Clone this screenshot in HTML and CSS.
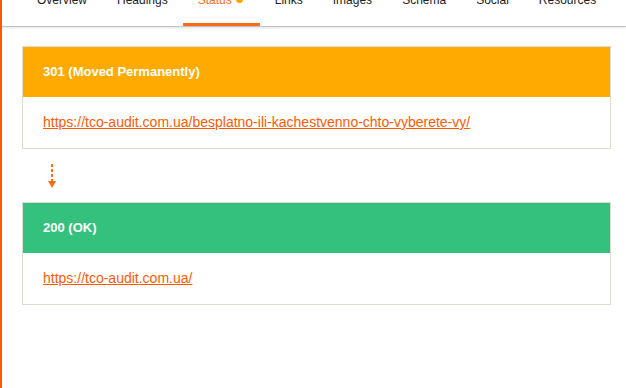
FILE: index.html
```html
<!DOCTYPE html>
<html lang="en">
<head>
    <meta charset="UTF-8">
    <meta name="viewport" content="width=device-width, initial-scale=1.0">
    <title>Status - Redirect Chain</title>
    <link rel="stylesheet" href="styles.css">
</head>
<body>
    <div class="panel">
        <div class="tabs">
            <div class="tab">Overview</div>
            <div class="tab">Headings</div>
            <div class="tab active">Status<span class="dot"></span></div>
            <div class="tab">Links</div>
            <div class="tab">Images</div>
            <div class="tab">Schema</div>
            <div class="tab">Social</div>
            <div class="tab">Resources</div>
        </div>

        <div class="content">
            <div class="status-card">
                <div class="status-head redirect">301 (Moved Permanently)</div>
                <div class="status-body">
                    <a href="#">https://tco-audit.com.ua/besplatno-ili-kachestvenno-chto-vyberete-vy/</a>
                </div>
            </div>

            <div class="hop">
                <svg width="10" height="26" viewBox="0 0 10 26">
                    <line x1="5" y1="0" x2="5" y2="17" stroke="#ff6a13" stroke-width="2" stroke-dasharray="3 2"/>
                    <polygon points="1,17 9,17 5,24" fill="#ff6a13"/>
                </svg>
            </div>

            <div class="status-card">
                <div class="status-head ok">200 (OK)</div>
                <div class="status-body">
                    <a href="#">https://tco-audit.com.ua/</a>
                </div>
            </div>
        </div>
    </div>
</body>
</html>
```

FILE: styles.css
```css
body {
    margin: 0;
    background: #fff;
    font-family: "Liberation Sans", Arial, sans-serif;
}
.panel {
    min-height: 388px;
    border-left: 2px solid #ff5a00;
    box-sizing: border-box;
}
.tabs {
    display: flex;
    align-items: flex-start;
    height: 26px;
    padding-left: 20px;
    border-bottom: 1px solid #c4c4c4;
    box-shadow: 0 1px 2px rgba(0,0,0,0.12);
    font-size: 12px;
    color: #222;
}
.tab {
    padding: 0 15px;
    margin-top: -7px;
    line-height: 14px;
    white-space: nowrap;
}
.tab.active {
    color: #ff6a13;
    padding-right: 17px;
    height: 30px;
    border-bottom: 3px solid #ff6a13;
}
.dot {
    display: inline-block;
    width: 7px;
    height: 7px;
    margin-left: 4px;
    border-radius: 50%;
    background: #ffa500;
    vertical-align: 1px;
}
.content {
    padding: 19px 15px 20px 20px;
}
.status-card {
    border: 1px solid #dedbd3;
}
.status-head {
    height: 50px;
    line-height: 50px;
    padding-left: 20px;
    color: #fff;
    font-weight: bold;
    font-size: 13px;
}
.redirect {
    background: #ffaa00;
}
.ok {
    background: #33c17d;
}
.status-body {
    height: 51px;
    line-height: 51px;
    padding-left: 20px;
    font-size: 14px;
}
.status-body a {
    color: #ff5a00;
}
.hop {
    height: 53px;
    padding-left: 25px;
    display: flex;
    align-items: center;
}
.hop svg {
    display: block;
    margin-top: 2px;
}
```
